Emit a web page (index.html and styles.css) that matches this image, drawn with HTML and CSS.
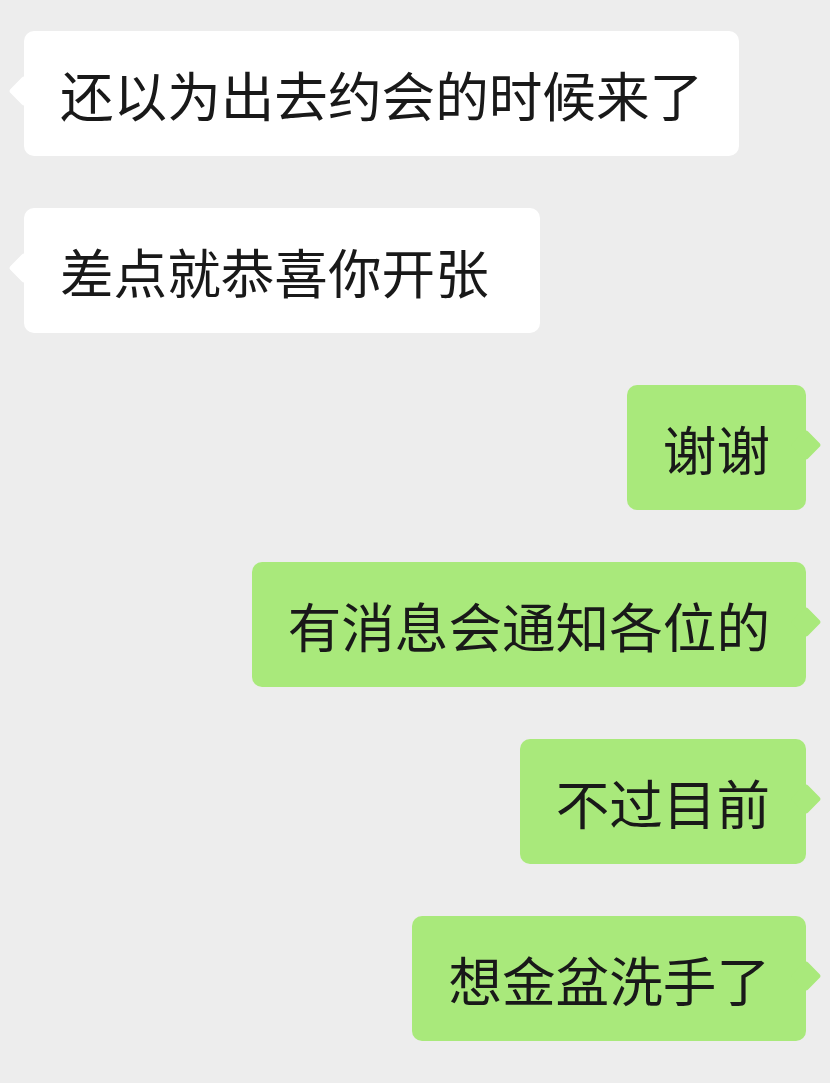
FILE: index.html
```html
<!DOCTYPE html>
<html lang="zh-CN">
<head>
  <meta charset="UTF-8">
  <title>聊天</title>
  <link rel="stylesheet" href="styles.css">
</head>
<body>

<div class="chat">
  <div class="msg left"><div class="bubble">还以为出去约会的时候来了</div></div>
  <div class="msg left"><div class="bubble wide">差点就恭喜你开张</div></div>
  <div class="msg right"><div class="bubble">谢谢</div></div>
  <div class="msg right"><div class="bubble">有消息会通知各位的</div></div>
  <div class="msg right"><div class="bubble">不过目前</div></div>
  <div class="msg right"><div class="bubble">想金盆洗手了</div></div>
</div>

</body>
</html>
```

FILE: styles.css
```css
body {
  margin: 0;
  background-color: #ededed;
  font-family: "Noto Sans CJK SC", "Noto Sans", sans-serif;
}

.chat {
  display: flex;
  flex-direction: column;
  gap: 52px;
  padding: 31px 24px 40px;
}

.msg {
  display: flex;
}

.msg.right {
  justify-content: flex-end;
}

.bubble {
  position: relative;
  height: 125px;
  display: flex;
  align-items: center;
  padding: 0 36px;
  font-size: 53.6px;
  color: #191919;
  border-radius: 10px;
  background: #fff;
  white-space: nowrap;
}

/* trailing space in the original message */
.bubble.wide {
  padding-right: 51px;
}

.bubble::before {
  content: "";
  position: absolute;
  top: 49px;
  width: 22px;
  height: 22px;
  border-radius: 3px;
  background: inherit;
  transform: rotate(45deg);
}

.left .bubble::before {
  left: -11px;
}

.right .bubble {
  background: #a9e97b;
}

.right .bubble::before {
  right: -11px;
}
```
